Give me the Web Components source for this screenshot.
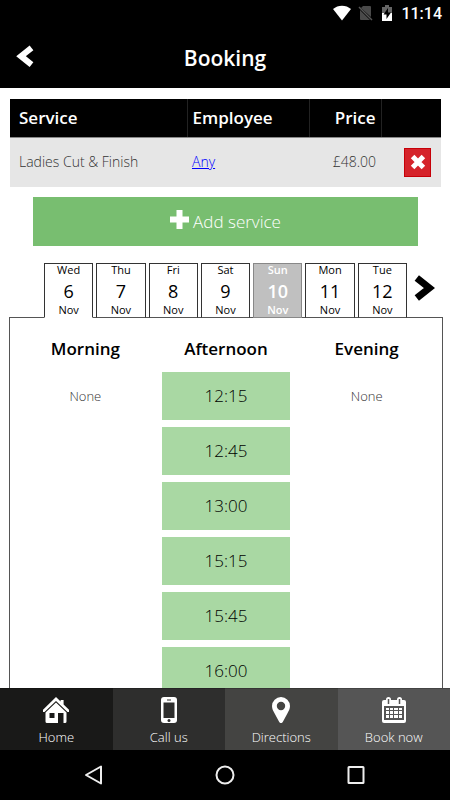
<!DOCTYPE html>
<html lang="en">
<head>
<meta charset="utf-8">
<meta name="viewport" content="width=device-width, initial-scale=1">
<title>Booking</title>
<style>
  body { margin: 0; background: #fff; color: #000; font-family: "Open Sans", "Noto Sans", sans-serif; }
</style>
</head>
<body>
<booking-app>
  <status-bar slot="top" time="11:14"></status-bar>
  <app-header slot="top">Booking</app-header>

  <service-table service="Ladies Cut &amp; Finish" employee="Any" price="£48.00"></service-table>
  <add-button>Add service</add-button>
  <day-strip>
    <day-tab weekday="Wed" day="6" month="Nov" selected></day-tab>
    <day-tab weekday="Thu" day="7" month="Nov"></day-tab>
    <day-tab weekday="Fri" day="8" month="Nov"></day-tab>
    <day-tab weekday="Sat" day="9" month="Nov"></day-tab>
    <day-tab weekday="Sun" day="10" month="Nov" closed></day-tab>
    <day-tab weekday="Mon" day="11" month="Nov"></day-tab>
    <day-tab weekday="Tue" day="12" month="Nov"></day-tab>
  </day-strip>
  <time-panel>
    <time-column heading="Morning"><span>None</span></time-column>
    <time-column heading="Afternoon">
      <time-slot>12:15</time-slot>
      <time-slot>12:45</time-slot>
      <time-slot>13:00</time-slot>
      <time-slot>15:15</time-slot>
      <time-slot>15:45</time-slot>
      <time-slot>16:00</time-slot>
    </time-column>
    <time-column heading="Evening"><span>None</span></time-column>
  </time-panel>

  <tab-bar slot="bottom">
    <tab-item style="--tone:#191918">
      <svg slot="icon" viewBox="0 0 26 26" width="26" height="26" fill="#fff"><path d="M13 0 17.600 4.500V3h3v4.400L26 12.700V15h-1.500L13 3.900 1.500 15H0v-2.300z"/><path d="M13 5.400 23.500 15.600v8.900a1.500 1.500 0 0 1-1.500 1.500h-1.500V16H15v10H4a1.500 1.500 0 0 1-1.500-1.500v-8.900zM6.500 16v5h5v-5z" fill-rule="evenodd"/></svg>
      Home
    </tab-item>
    <tab-item style="--tone:#2e2e2d">
      <svg slot="icon" viewBox="0 0 26 26" width="26" height="26"><rect x="5" width="16" height="26" rx="3" fill="#fff"/><path d="M7.500 5.500h11V21h-11z" fill="#2e2e2d"/><path d="M11 3h4" stroke="#2e2e2d"/><circle cx="13" cy="23.500" r="1.500" fill="#2e2e2d"/></svg>
      Call us
    </tab-item>
    <tab-item style="--tone:#444442">
      <svg slot="icon" viewBox="0 0 26 26" width="26" height="26"><path d="M13 0a9 9 0 0 1 9 9c0 3-1.300 5-2.500 7.200l-4.600 8.600c-.8 1.600-3 1.600-3.800 0l-4.600-8.600C5.300 14 4 12 4 9a9 9 0 0 1 9-9zm0 4.800a4.200 4.200 0 1 0 0 8.400 4.200 4.200 0 0 0 0-8.400z" fill="#fff"/></svg>
      Directions
    </tab-item>
    <tab-item style="--tone:#555555">
      <svg slot="icon" viewBox="0 0 26 26" width="26" height="26"><path d="M3 3h20a2 2 0 0 1 2 2v19a2 2 0 0 1-2 2H3a2 2 0 0 1-2-2V5a2 2 0 0 1 2-2z" fill="#fff"/><rect x="5" width="5" height="8" rx="2.500" fill="#fff"/><rect x="16" width="5" height="8" rx="2.500" fill="#fff"/><path d="M7.500 2v5M18.500 2v5" stroke="#555" stroke-width="1.500"/><path d="M3 9h20v14H3z" fill="#555"/><path d="M5 11h3v2H5zM9 11h3v2H9zM13 11h4v2h-4zM18 11h3v2h-3zM5 14h3v3H5zM9 14h3v3H9zM13 14h4v3h-4zM18 14h3v3h-3zM5 18h3v3H5zM9 18h3v3H9zM13 18h4v3h-4zM18 18h3v3h-3z" fill="#fff"/></svg>
      Book now
    </tab-item>
  </tab-bar>
  <system-nav slot="bottom"></system-nav>
</booking-app>

<script>
  const define = (name, html, setup) => {
    const template = document.createElement('template');
    template.innerHTML = `<style>*{box-sizing:border-box}:host{box-sizing:border-box}button{margin:0;padding:0;border:0;background:none;color:inherit;font:inherit;cursor:pointer}svg{display:block}</style>${html}`;
    customElements.define(name, class extends HTMLElement {
      constructor() {
        super();
        this.attachShadow({ mode: 'open' }).append(template.content.cloneNode(true));
      }
      connectedCallback() {
        this.shadowRoot.querySelectorAll('[data-text]').forEach(node => {
          node.textContent = this.getAttribute(node.dataset.text) || '';
        });
        if (setup) setup(this);
      }
    });
  };

  define('booking-app', `
    <style>
      :host { display: flex; flex-direction: column; height: 100vh; }
      header, footer { flex: none; background: #000; color: #fff; }
      main { flex: 1; min-height: 0; overflow: hidden; padding: 11px 7px 0 9px; }
    </style>
    <header><slot name="top"></slot></header>
    <main><slot></slot></main>
    <footer><slot name="bottom"></slot></footer>`);

  define('status-bar', `
    <style>
      :host { display: flex; justify-content: flex-end; align-items: center; gap: 6px; height: 27px; padding-right: 8px; font: 500 16px/20px Roboto, sans-serif; }
      .icons { display: flex; gap: 6px; padding-bottom: 1px; }
    </style>
    <div class="icons">
      <svg width="20" height="16" viewBox="0 0 20 16"><path d="M1 4C6-.5 14-.5 19 4L10 15.500z" fill="#fff"/></svg>
      <svg width="15" height="16" viewBox="0 0 15 16"><path d="M5 1h7a1 1 0 0 1 1 1v10L3 3zM2 5l10 10H3a1 1 0 0 1-1-1z" fill="#4a4a4a"/><path d="m1 2 13 13" stroke="#555" stroke-width="1.500"/></svg>
      <svg width="16" height="16" viewBox="0 0 16 16"><path d="M6 0h4v2h3v6H3V2h3z" fill="#666"/><path d="M3 8h10v8H3z" fill="#fff"/><path d="M9 3 4.500 9.500H7.500V14L12 7.500H9z" fill="#000"/></svg>
    </div>
    <span data-text="time"></span>`);

  define('app-header', `
    <style>
      :host { display: grid; grid-template-columns: 50px 1fr 50px; align-items: center; height: 61px; }
      h1 { margin: 0; text-align: center; font-size: 21px; font-weight: 600; line-height: 30px; }
      button { height: 60px; padding: 0 0 4px 16px; }
    </style>
    <button type="button" aria-label="Back"><svg width="18" height="22" viewBox="0 0 18 22"><path d="M15.500 2.800 5 11.200l10.500 8.400" fill="none" stroke="#fff" stroke-width="6"/></svg></button>
    <h1><slot></slot></h1>`);

  define('service-table', `
    <style>
      :host { display: block; padding: 0 2px 0 1px; }
      table { width: 100%; border-collapse: collapse; table-layout: fixed; }
      th { height: 38px; padding: 0 5px; background: #000; color: #fff; border-left: 1px solid #222; border-bottom: 1px solid #888; text-align: left; font-size: 17px; font-weight: 600; line-height: 22px; }
      td { height: 50px; padding: 0 5px; background: #e6e6e6; font-size: 14px; font-weight: 300; line-height: 20px; color: #333; }
      th:first-child, td:first-child { padding-left: 9px; border-left: 0; }
      th:nth-child(2) { width: 122px; }
      th:nth-child(3) { width: 72px; }
      th:nth-child(4) { width: 60px; }
      th:nth-child(3), td:nth-child(3) { text-align: right; }
      a { color: #00f; }
      button { display: flex; align-items: center; justify-content: center; width: 27px; height: 29px; margin-left: auto; background: #d5232a; border: 1px solid #c60008; }
      td:last-child { padding-right: 10px; }
    </style>
    <table>
      <thead><tr><th scope="col">Service</th><th scope="col">Employee</th><th scope="col">Price</th><th aria-label="Remove"></th></tr></thead>
      <tbody><tr>
        <td data-text="service"></td>
        <td><a href="#employee" data-text="employee"></a></td>
        <td data-text="price"></td>
        <td><button type="button" aria-label="Remove service"><svg width="16" height="16" viewBox="0 0 16 16"><path d="m2.600 2.600 10.800 10.800M13.400 2.600 2.600 13.400" stroke="#fff" stroke-width="5"/></svg></button></td>
      </tr></tbody>
    </table>`);

  define('add-button', `
    <style>
      :host { display: block; padding: 10px 25px 0 24px; }
      button { display: flex; align-items: center; justify-content: center; gap: 4px; width: 100%; height: 49px; background: #78be70; color: #fff; font-size: 17px; font-weight: 300; line-height: 22px; }
      svg { margin-bottom: 5px; }
    </style>
    <button type="button"><svg width="19" height="19" viewBox="0 0 19 19"><path d="M6.500 0h6v6.500H19v6h-6.500V19h-6v-6.500H0v-6h6.500z" fill="#fff"/></svg><span><slot></slot></span></button>`);

  define('day-strip', `
    <style>
      :host { display: flex; padding: 17px 0 0 35px; }
      .days { flex: 1; display: grid; grid-template-columns: repeat(7, 1fr); gap: 3px; }
      button { width: 36px; padding: 0 0 6px 7px; }
    </style>
    <div class="days" role="tablist"><slot></slot></div>
    <button type="button" aria-label="Next days"><svg width="21" height="26" viewBox="0 0 21 26"><path d="m2.800 3 12.700 10L2.800 23" fill="none" stroke="#000" stroke-width="7"/></svg></button>`);

  define('day-tab', `
    <style>
      :host { display: block; }
      button { display: block; width: 100%; height: 55px; background: #fff; border: 1px solid #333; border-bottom-color: #555; font-size: 11px; font-weight: 500; line-height: 12px; text-align: center; }
      span, strong { display: block; }
      strong { padding-top: 2px; font-size: 18px; font-weight: 500; line-height: 26px; }
      button { padding-bottom: 1px; }
      :host([selected]) button { border-bottom-color: #fff; }
      :host([closed]) button { background: #c0c0c0; border-color: #888; color: #fff; font-weight: 600; }
      :host([closed]) strong { font-weight: 600; }
    </style>
    <button type="button" role="tab"><span data-text="weekday"></span><strong data-text="day"></strong><span data-text="month"></span></button>`,
    el => {
      const button = el.shadowRoot.querySelector('button');
      button.setAttribute('aria-selected', el.hasAttribute('selected'));
      button.disabled = el.hasAttribute('closed');
    });

  define('time-panel', `
    <style>
      :host { display: grid; grid-template-columns: repeat(3, 1fr); margin-top: -1px; padding: 20px 5px 12px; border: 1px solid #555; }
    </style>
    <slot></slot>`);

  define('time-column', `
    <style>
      :host { display: block; padding: 0 6px; }
      h2 { margin: 0 0 12px; text-align: center; font-size: 17px; font-weight: 600; line-height: 22px; }
      .times { display: grid; gap: 7px; }
      ::slotted(span) { font-size: 13px; font-weight: 300; line-height: 48px; text-align: center; color: #333; }
    </style>
    <h2 data-text="heading"></h2>
    <div class="times"><slot></slot></div>`);

  define('time-slot', `
    <style>
      :host { display: block; }
      button { width: 100%; height: 48px; background: #a9d8a3; font-size: 17px; font-weight: 300; line-height: 22px; }
    </style>
    <button type="button"><slot></slot></button>`);

  define('tab-bar', `
    <style>
      :host { display: grid; grid-template-columns: repeat(4, 1fr); }
    </style>
    <slot></slot>`);

  define('tab-item', `
    <style>
      :host { display: block; background: var(--tone); }
      button { display: flex; flex-direction: column; align-items: center; gap: 4px; width: 100%; height: 62px; padding-top: 8px; border-top: 1px solid #0003; font-size: 13px; font-weight: 300; line-height: 20px; }
    </style>
    <button type="button"><slot name="icon"></slot><span><slot></slot></span></button>`);

  define('system-nav', `
    <style>
      :host { display: flex; justify-content: center; gap: 103px; height: 50px; }
      button { display: flex; align-items: center; justify-content: center; width: 28px; }
      svg { fill: none; stroke: #eee; stroke-width: 2; }
    </style>
    <button type="button" aria-label="Back"><svg width="20" height="20" viewBox="0 0 20 20"><path d="M17 1.500v17L2 10z" stroke-linejoin="round"/></svg></button>
    <button type="button" aria-label="Home"><svg width="20" height="20" viewBox="0 0 20 20"><circle cx="10" cy="10" r="8.500"/></svg></button>
    <button type="button" aria-label="Recent apps"><svg width="20" height="20" viewBox="0 0 20 20"><rect x="2.500" y="2" width="15" height="16" rx=".5"/></svg></button>`);
</script>
</body>
</html>
